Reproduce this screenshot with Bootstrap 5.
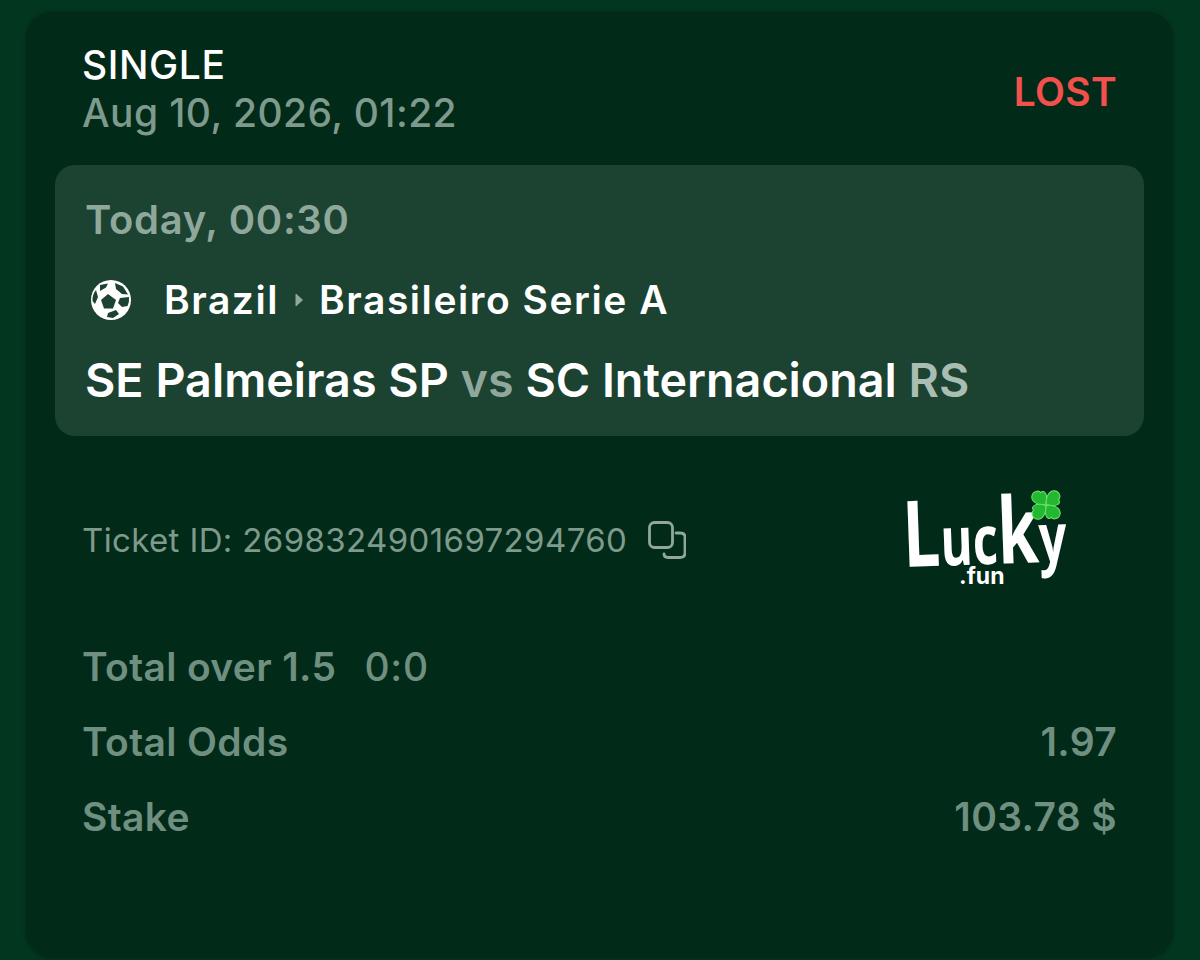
<!DOCTYPE html>
<html lang="en">
<head>
    <meta charset="UTF-8">
    <meta name="viewport" content="width=device-width, initial-scale=1.0">
    <title>Ticket</title>
    <link href="https://cdn.jsdelivr.net/npm/bootstrap@5.3.3/dist/css/bootstrap.min.css" rel="stylesheet">
    <style>
        html, body { height: 960px; overflow: hidden; }
        body { background: #03361f; font-family: Inter, "Liberation Sans", sans-serif; padding: 12px 27px 0 26px; }
        .ticket { background: #022a18; border-radius: 26px; height: 946px; padding: 32px 29px 0; box-shadow: 0 0 4px rgba(0,0,0,.25); }
        .ticket-head { padding: 0 27px; height: 121px; }
        .kind { color: #fff; font-size: 39px; font-weight: 500; line-height: 42px; letter-spacing: .6px; }
        .placed { color: #7e9a8c; font-size: 39px; font-weight: 500; line-height: 54px; letter-spacing: .4px; }
        .result { color: #f2504d; font-size: 39px; font-weight: 600; line-height: 42px; margin-top: 27px; letter-spacing: .3px; }
        .event { background: #1c4232; border-radius: 20px; height: 271px; padding: 31px 30px 0; }
        .when { color: #8fa89b; font-size: 40px; font-weight: 600; line-height: 48px; letter-spacing: .7px; }
        .league { color: #fff; font-size: 39px; font-weight: 600; line-height: 48px; margin-top: 32px; letter-spacing: 1.55px; }
        .ball { width: 40px; height: 40px; margin-right: 33px; margin-left: 6px; }
        .crumb { width: 12px; height: 16px; margin: 0 14px 0 14px; }
        .teams { color: #fff; font-size: 46.7px; font-weight: 600; line-height: 56px; margin-top: 28px; }
        .teams .versus { color: #8fa89b; }
        .teams .region { color: #aabdb3; }
        .ticket-id { padding: 0 27px; height: 207px; }
        .id-text { color: #7e9a8c; font-size: 33px; line-height: 40px; letter-spacing: .37px; }
        .copy-icon { width: 38px; height: 38px; margin-left: 21px; }
        .brand { position: relative; width: 165px; height: 100px; margin-right: 45px; margin-top: 3px; color: #fff; }
        .brand-name { font-family: "Open Sans", sans-serif; font-size: 92px; font-weight: 700; line-height: 92px; transform: rotate(-2deg) scaleX(.72); transform-origin: left top; position: absolute; left: -6px; top: -5px; white-space: nowrap; }
        .brand-small { font-size: 68px; }
        .brand-tld { font-family: Inter, sans-serif; font-size: 23px; font-weight: 700; line-height: 22px; position: absolute; left: 52px; top: 74px; }
        .clover { position: absolute; left: 124px; top: -1px; width: 30px; height: 30px; }
        .stat-row { color: #6f8f80; font-size: 39px; font-weight: 600; line-height: 48px; height: 75px; padding: 0 27px; letter-spacing: .35px; }
        .pick-gap { margin-left: 28px; font-weight: 500; letter-spacing: .8px; }
    </style>
</head>
<body>
    <div class="ticket">
        <div class="ticket-head d-flex justify-content-between align-items-start">
            <div>
                <div class="kind">SINGLE</div>
                <div class="placed">Aug 10, 2026, 01:22</div>
            </div>
            <div class="result">LOST</div>
        </div>
        <div class="event">
            <div class="when">Today, 00:30</div>
            <div class="league d-flex align-items-center">
                <svg class="ball" viewBox="0 0 40 40">
                    <circle cx="20" cy="20" r="20" fill="#fff"/>
                    <g fill="#1c4232">
                        <path d="M17 14l8 6-3 8.500H13L10 20z"/>
                        <path d="M9 5l8-1.500-2 4-6 3.500zM24 3l8 3.500 5 8-6-.5-6-5zM5 10l2 7-3 7-2.500-3q-.5-6 3.500-11zM29 18l9-1q.5 5-1.500 9l-5.500 1-4-4zM17 33l8-3 3 4-6 4-6-1z"/>
                    </g>
                </svg>
                <span>Brazil</span>
                <svg class="crumb" viewBox="0 0 12 16"><path d="M3 2l6.500 6-6.500 6z" fill="#8fa89b" stroke="#8fa89b" stroke-linejoin="round"/></svg>
                <span>Brasileiro Serie A</span>
            </div>
            <div class="teams">SE Palmeiras SP <span class="versus">vs</span> SC Internacional <span class="region">RS</span></div>
        </div>
        <div class="ticket-id d-flex justify-content-between align-items-center">
            <div class="d-flex align-items-center">
                <span class="id-text">Ticket ID: 2698324901697294760</span>
                <svg class="copy-icon" viewBox="0 0 38 38" fill="none" stroke="#8fa89b" stroke-width="2.800" stroke-linecap="round">
                    <rect x="1.500" y="1.500" width="23" height="25" rx="5"/>
                    <path d="M28 12h4q5 0 5 4v16q0 4.500-5 4.500H20q-4 0-4-3.500"/>
                </svg>
            </div>
            <div class="brand">
                <span class="brand-name">L<span class="brand-small">uc</span>k<span class="brand-small">y</span></span>
                <span class="brand-tld">.fun</span>
                <svg class="clover" viewBox="0 0 34 34">
                    <g fill="#22b830" stroke="#6fe070" stroke-width="1.200">
                        <path d="M16.500 16.500C8 18 0 13 1 7 2 1 9 0 11 3 15-1 20 5 16.500 16.500z"/>
                        <path d="M16.500 16.500C8 18 0 13 1 7 2 1 9 0 11 3 15-1 20 5 16.500 16.500z" transform="rotate(90 17 17)"/>
                        <path d="M16.500 16.500C8 18 0 13 1 7 2 1 9 0 11 3 15-1 20 5 16.500 16.500z" transform="rotate(180 17 17)"/>
                        <path d="M16.500 16.500C8 18 0 13 1 7 2 1 9 0 11 3 15-1 20 5 16.500 16.500z" transform="rotate(270 17 17)"/>
                    </g>
                </svg>
            </div>
        </div>
        <div class="stat-row d-flex"><span>Total over 1.5</span><span class="pick-gap">0:0</span></div>
        <div class="stat-row d-flex justify-content-between"><span>Total Odds</span><span>1.97</span></div>
        <div class="stat-row d-flex justify-content-between"><span>Stake</span><span>103.78 $</span></div>
    </div>
    <script src="https://cdn.jsdelivr.net/npm/bootstrap@5.3.3/dist/js/bootstrap.bundle.min.js"></script>
</body>
</html>
